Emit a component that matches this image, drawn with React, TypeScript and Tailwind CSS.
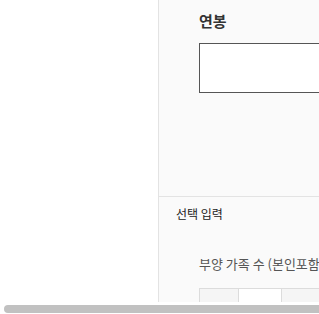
export default function App() {
  const font = { fontFamily: '"Noto Sans CJK KR", "Noto Sans", sans-serif' };
  return (
    <div className="w-[319px] h-[314px] overflow-hidden bg-white flex flex-col" style={font}>
      <div className="flex h-[302px] overflow-hidden">
        <div className="w-[159px] shrink-0 bg-white border-r border-[#e3e3e3]" />
        <div className="flex-1 min-w-0 bg-[#fafafa] flex flex-col overflow-hidden">
          <div className="h-[197px] shrink-0 border-b border-[#e3e3e3] pl-[40px] pt-[10px]">
            <div className="text-[15px] font-bold text-[#333] leading-[22px] whitespace-nowrap">연봉</div>
            <div className="mt-[11px] h-[50px] w-[200px] bg-white border border-[#555]" />
          </div>
          <div className="pl-[17px] pt-[8px] text-[12px] text-[#222] leading-[18px] whitespace-nowrap">선택 입력</div>
          <div className="pl-[40px] pt-[32px] text-[13px] text-[#555] leading-[18px] whitespace-nowrap">부양 가족 수 (본인포함)</div>
          <div className="ml-[40px] mt-[15px] flex h-[30px] w-[200px] border-t border-l border-[#dcdcdc]">
            <div className="w-[39px] bg-[#f5f5f5] border-r border-[#dcdcdc]" />
            <div className="w-[43px] bg-white border-r border-[#dcdcdc]" />
            <div className="w-[43px] bg-[#f5f5f5] border-r border-[#dcdcdc]" />
          </div>
        </div>
      </div>
      <div className="h-[12px] bg-white flex items-start pt-[3px] pl-[4px]">
        <div className="h-[8px] flex-1 rounded-l-full bg-[#c1c1c1]" />
      </div>
    </div>
  );
}
